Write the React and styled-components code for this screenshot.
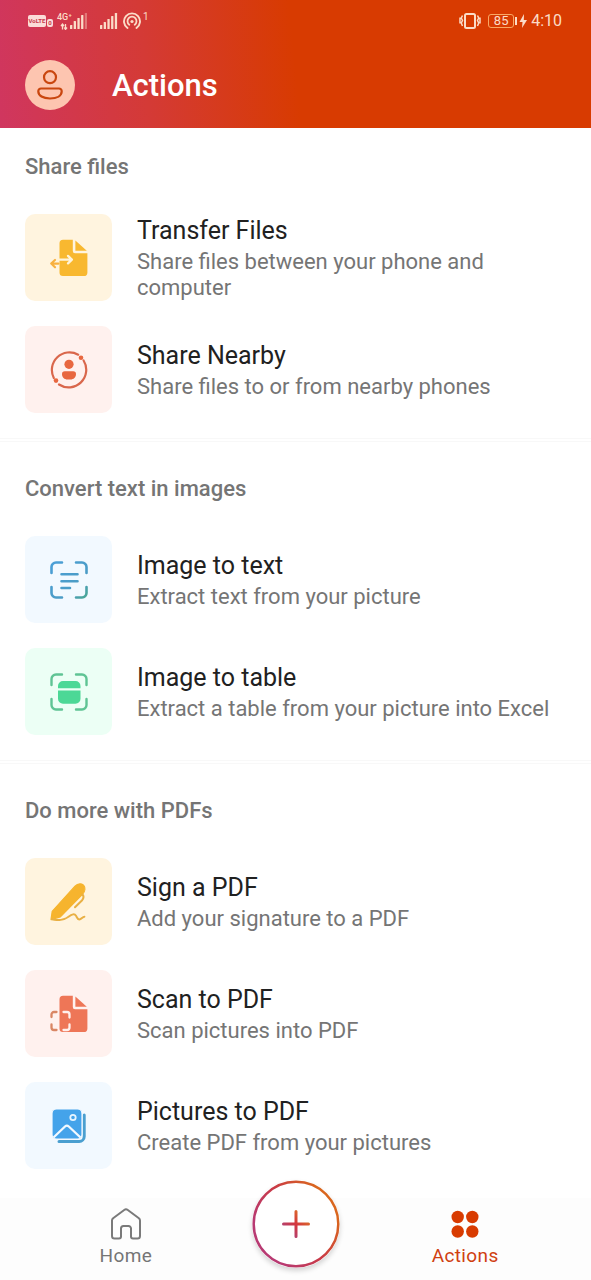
import React from "react";
import styled, { createGlobalStyle } from "styled-components";

const GlobalStyle = createGlobalStyle`
  *, *::before, *::after { box-sizing: border-box; }
  body {
    margin: 0;
    background: #ffffff;
    font-family: Roboto, "Liberation Sans", sans-serif;
    color: #212121;
  }
  h1, h2, h3, p, ul { margin: 0; padding: 0; }
  ul { list-style: none; }
`;

const Screen = styled.div`
  min-height: 100vh;
  display: flex;
  flex-direction: column;
`;

const Header = styled.header`
  background: linear-gradient(84deg, #d0365f 0%, #d43a36 25%, #d83b01 50%);
  color: #ffffff;
`;

const StatusBar = styled.div`
  height: 42px;
  padding: 0 29px 0 28px;
  display: flex;
  align-items: center;
  justify-content: space-between;
  color: #fbdcc8;
`;

const StatusGroup = styled.div`
  display: flex;
  align-items: center;
  gap: ${(p) => p.$gap}px;
`;

const VolteBadge = styled.span`
  width: 18px;
  border-radius: 2px;
  background: #fbdcd8;
  color: #c8384c;
  font-size: 6px;
  line-height: 12px;
  font-weight: 700;
  text-align: center;
`;

const SimNumber = styled.span`
  width: 6px;
  border-radius: 2px;
  background: #fbdcd8;
  color: #c8384c;
  font-size: 6px;
  line-height: 8px;
  font-weight: 700;
  text-align: center;
  margin-top: 4px;
`;

const NetworkStack = styled.div`
  display: flex;
  flex-direction: column;
  width: 12px;
`;

const NetworkLabel = styled.span`
  font-size: 9px;
  line-height: 9px;
  font-weight: 500;
  white-space: nowrap;
`;

const HotspotCount = styled.span`
  font-size: 10px;
  line-height: 10px;
  align-self: flex-start;
`;

const Battery = styled.span`
  width: 26px;
  height: 14px;
  border: 1px solid #f9a865;
  border-radius: 3px;
  font-size: 13px;
  line-height: 12px;
  text-align: center;
`;

const Clock = styled.time`
  font-size: 16px;
  line-height: 20px;
`;

const AppBar = styled.div`
  height: 86px;
  padding: 0 25px;
  display: flex;
  align-items: center;
  gap: 37px;
`;

const Avatar = styled.button`
  width: 50px;
  height: 50px;
  padding: 0;
  border: 0;
  border-radius: 50%;
  background: #fdc5b0;
  display: grid;
  place-items: center;
`;

const Title = styled.h1`
  padding-top: 2px;
  font-size: 31px;
  line-height: 36px;
  font-weight: 500;
`;

const Main = styled.main`
  flex: 1;
`;

const Section = styled.section`
  padding: 33px 25px 25px;
  border-top: 4px double #f8f8f8;

  &:first-child {
    padding-top: 25px;
    border-top: 0;
  }
`;

const SectionTitle = styled.h2`
  margin-bottom: 33px;
  font-size: 22px;
  line-height: 28px;
  font-weight: 500;
  color: #757575;
`;

const ActionList = styled.ul`
  display: flex;
  flex-direction: column;
  gap: 25px;
`;

const ActionButton = styled.button`
  width: 100%;
  padding: 0;
  border: 0;
  background: none;
  font: inherit;
  color: inherit;
  text-align: left;
  display: flex;
  align-items: center;
  gap: 25px;
`;

const Tile = styled.span`
  flex: none;
  width: 87px;
  height: 87px;
  border-radius: 10px;
  background: ${(p) => p.$tint};
  display: grid;
  place-items: center;
`;

const ActionText = styled.span`
  display: flex;
  flex-direction: column;
  gap: 2px;
`;

const ActionName = styled.span`
  font-size: 25px;
  line-height: 33px;
`;

const ActionHint = styled.span`
  font-size: 22px;
  line-height: 26px;
  color: #757575;
`;

const BottomNav = styled.nav`
  position: sticky;
  bottom: 0;
  height: 82px;
  padding: 0 41px;
  background: #fdfdfd;
  display: grid;
  grid-template-columns: repeat(3, 1fr);
  justify-items: center;
`;

const NavLink = styled.a`
  padding-top: 10px;
  display: flex;
  flex-direction: column;
  align-items: center;
  gap: 4px;
  font-size: 19px;
  line-height: 24px;
  letter-spacing: 0.02em;
  text-decoration: none;
  color: ${(p) => (p.$active ? "#d04010" : "#757575")};
`;

const CreateButton = styled.button`
  position: absolute;
  top: -18px;
  left: 50%;
  transform: translateX(-50%);
  width: 88px;
  height: 88px;
  padding: 0;
  border: 0;
  border-radius: 50%;
  background: #ffffff;
  box-shadow: 0 3px 5px rgba(0, 0, 0, 0.16);
`;

const Icon = ({ size = 38, children, ...rest }) => (
  <svg width={size} height={size} viewBox={`0 0 ${size} ${size}`} fill="none" aria-hidden="true" {...rest}>
    {children}
  </svg>
);

const Bars = ({ width, height, heights, faintLast }) => (
  <svg width={width} height={height} viewBox={`0 0 ${width} ${height}`} fill="currentColor" aria-hidden="true">
    {heights.map((h, i) => (
      <rect key={i} x={i * 3.7} y={height - h} width="2.3" height={h} rx="0.5" opacity={faintLast && i === heights.length - 1 ? 0.4 : 1} />
    ))}
  </svg>
);

const Sheet = ({ color }) => (
  <g fill={color}>
    <path d="M13 .8H22.8V12a2.2 2.2 0 0 0 2.2 2.2H37.4V33.4A3.7 3.7 0 0 1 33.7 37.1H13a3.5 3.5 0 0 1-3.5-3.5V4.3A3.5 3.5 0 0 1 13 .8Z" />
    <path d="M25.4 1.4 36.8 11.8H25.4Z" />
  </g>
);

const TransferIcon = () => (
  <Icon>
    <Sheet color="#f8b830" />
    <path d="M7 20.600H21.500M18 16.900 21.900 20.600 18 24.400" stroke="#fff4da" strokeWidth="2.300" strokeLinecap="round" strokeLinejoin="round" />
    <path d="M8.500 24.600H2M5 20.900 1.200 24.600 5 28.300" stroke="#f8b040" strokeWidth="2.100" strokeLinecap="round" strokeLinejoin="round" />
  </Icon>
);

const NearbyIcon = () => (
  <Icon>
    <path d="M28.200 3.700A17.600 17.600 0 0 0 3.800 27M9 33.500A17.600 17.600 0 0 0 33.600 9.500" stroke="#d9674c" strokeWidth="2.200" strokeLinecap="round" />
    <g fill="#e8673f">
      <circle cx="31" cy="6.800" r="2.300" />
      <circle cx="6" cy="29.600" r="2.300" />
      <circle cx="19" cy="13.300" r="4.600" />
      <path d="M14.800 20.300h8.400a2.800 2.800 0 0 1 2.800 2.800c0 3.300-2.400 5.500-5.500 5.500h-3c-3.100 0-5.500-2.200-5.500-5.500a2.800 2.800 0 0 1 2.800-2.800Z" />
    </g>
  </Icon>
);

const corners = "M1.5 12V6A4.5 4.5 0 0 1 6 1.5H12M26 1.5H32A4.5 4.5 0 0 1 36.5 6V12M36.5 26V32A4.5 4.5 0 0 1 32 36.5H26M12 36.5H6A4.5 4.5 0 0 1 1.5 32V26";

const ImageTextIcon = () => (
  <Icon>
    <defs>
      <linearGradient id="scanBlue" x1="0" y1="0" x2="38" y2="38" gradientUnits="userSpaceOnUse">
        <stop stopColor="#4b9fd8" />
        <stop offset="0.7" stopColor="#4b9cc4" />
        <stop offset="1" stopColor="#4aa88c" />
      </linearGradient>
    </defs>
    <g stroke="url(#scanBlue)" strokeWidth="2.6" strokeLinecap="round">
      <path d={corners} />
      <path d="M11.5 13.2H27.5M11.5 20.2H27.5M11.5 27H20" />
    </g>
  </Icon>
);

const ImageTableIcon = () => (
  <Icon>
    <path d={corners} stroke="#5fc494" strokeWidth="2.4" strokeLinecap="round" />
    <path d="M8 15.2V13a5 5 0 0 1 5-5H25.5a5 5 0 0 1 5 5v2.2ZM8 17.6H30.5V25.8a5 5 0 0 1-5 5H13a5 5 0 0 1-5-5Z" fill="#4cd896" />
  </Icon>
);

const SignIcon = () => (
  <Icon>
    <path d="M2.2 28.3 25 3.2C28 .2 32 .3 33.7 2.3c2 2.3 1.500 6-1 8.700L10.400 33.800 1 36.600Z" fill="#f6b42e" stroke="#f6b42e" strokeWidth="1.200" strokeLinejoin="round" />
    <path d="M32.500 11.500c1.800 2.200 1.200 4-.6 6L25 24.300M2 36.300c6 1.400 12 .8 16.500-2.600 3.500-2.600 6-3.300 7.500-1 1.200 1.900 1.400 3.800 3.400 3.800 2 0 3-2.500 5-2.800" stroke="#e9b044" strokeWidth="2" strokeLinecap="round" strokeLinejoin="round" />
  </Icon>
);

const ScanIcon = () => (
  <Icon>
    <Sheet color="#ee7657" />
    <path d="M1.500 22V19.500A2.500 2.500 0 0 1 4 17H6.500M1.500 29.500V32.500A2.500 2.500 0 0 0 4 35H6.500" stroke="#d98664" strokeWidth="2.300" strokeLinecap="round" />
    <path d="M13.500 17H17A2.500 2.500 0 0 1 19.500 19.500V22.500M19.500 29.500V32.500A2.500 2.500 0 0 1 17 35H13.500" stroke="#fff0ec" strokeWidth="2.300" strokeLinecap="round" />
  </Icon>
);

const PicturesIcon = () => (
  <Icon>
    <path d="M34.200 8V29.500A5 5 0 0 1 29.200 34.500H9" stroke="#4a9fd0" strokeWidth="3" strokeLinecap="round" />
    <rect x="2" y="2" width="30" height="30" rx="4.500" fill="#44a3ea" stroke="#f2f9ff" strokeWidth="1.200" />
    <path d="M3.500 30.500 15 19.500a2.800 2.800 0 0 1 3.800 0L30.500 30.500" stroke="#f2f9ff" strokeWidth="2.300" />
    <circle cx="23" cy="10.500" r="2.700" stroke="#e6f5ff" strokeWidth="1.800" />
  </Icon>
);

const sections = [
  {
    title: "Share files",
    actions: [
      { name: "Transfer Files", hint: "Share files between your phone and computer", tint: "#fff4df", Glyph: TransferIcon },
      { name: "Share Nearby", hint: "Share files to or from nearby phones", tint: "#fff1ee", Glyph: NearbyIcon },
    ],
  },
  {
    title: "Convert text in images",
    actions: [
      { name: "Image to text", hint: "Extract text from your picture", tint: "#f2f9ff", Glyph: ImageTextIcon },
      { name: "Image to table", hint: "Extract a table from your picture into Excel", tint: "#ecfff5", Glyph: ImageTableIcon },
    ],
  },
  {
    title: "Do more with PDFs",
    actions: [
      { name: "Sign a PDF", hint: "Add your signature to a PDF", tint: "#fff4df", Glyph: SignIcon },
      { name: "Scan to PDF", hint: "Scan pictures into PDF", tint: "#fff1ee", Glyph: ScanIcon },
      { name: "Pictures to PDF", hint: "Create PDF from your pictures", tint: "#f2f9ff", Glyph: PicturesIcon },
    ],
  },
];

export default function App() {
  return (
    <Screen>
      <GlobalStyle />
      <Header>
        <StatusBar>
          <StatusGroup $gap={13}>
            <StatusGroup $gap={4}>
              <StatusGroup $gap={1}>
                <VolteBadge>VoLTE</VolteBadge>
                <SimNumber>0</SimNumber>
              </StatusGroup>
              <StatusGroup $gap={1}>
                <NetworkStack>
                  <NetworkLabel>4G⁺</NetworkLabel>
                  <svg width="12" height="8" viewBox="0 0 12 8" aria-hidden="true">
                    <path d="M5.500 7.500V2M4 4 5.500 2 7 4M8.500 2V7.500M7.200 5.500 8.500 7.500 10 5.500" fill="none" stroke="currentColor" strokeWidth="1.300" />
                  </svg>
                </NetworkStack>
                <Bars width={17} height={16} heights={[4, 8, 11, 14, 16]} faintLast />
              </StatusGroup>
            </StatusGroup>
            <StatusGroup $gap={2}>
              <StatusGroup $gap={5}>
                <Bars width={18} height={16} heights={[4, 7, 10, 13, 16]} />
                <Icon size={18} stroke="currentColor" strokeLinecap="round">
                  <path d="M4.500 16A8 8 0 1 1 13.500 16" strokeWidth="1.900" />
                  <path d="M6.300 12.800A4.500 4.500 0 1 1 11.700 12.800" strokeWidth="1.800" />
                  <circle cx="9" cy="9.500" r="1.600" fill="currentColor" stroke="none" />
                </Icon>
              </StatusGroup>
              <HotspotCount>1</HotspotCount>
            </StatusGroup>
          </StatusGroup>
          <StatusGroup $gap={4}>
            <StatusGroup $gap={7}>
              <svg width="22" height="16" viewBox="0 0 22 16" fill="none" stroke="currentColor" aria-hidden="true">
                <rect x="6" y="1" width="10" height="14" rx="1.500" strokeWidth="2" />
                <path d="M3.500 2.500 2.300 5 3.500 7.500 2.300 10 3.500 13M1 4.500V10.500M18.500 2.500 19.700 5 18.500 7.500 19.700 10 18.500 13M21 4.500V10.500" strokeWidth="1.500" />
              </svg>
              <StatusGroup $gap={1}>
                <Battery>85</Battery>
                <svg width="12" height="14" viewBox="0 0 12 14" fill="currentColor" aria-hidden="true">
                  <rect x="0" y="3" width="2" height="8" />
                  <path d="M9 0 4.500 8H7.500L7 14 12 6H8.800Z" />
                </svg>
              </StatusGroup>
            </StatusGroup>
            <Clock>4:10</Clock>
          </StatusGroup>
        </StatusBar>
        <AppBar>
          <Avatar type="button" aria-label="Account">
            <Icon size={30} stroke="#c9460f" strokeWidth="2.200">
              <circle cx="15" cy="7.200" r="6" />
              <path d="M6 18.500H24A2.700 2.700 0 0 1 26.700 21.200C26.700 25.700 22 28.500 15 28.500S3.300 25.700 3.300 21.200A2.700 2.700 0 0 1 6 18.500Z" />
            </Icon>
          </Avatar>
          <Title>Actions</Title>
        </AppBar>
      </Header>

      <Main>
        {sections.map(({ title, actions }) => (
          <Section key={title}>
            <SectionTitle>{title}</SectionTitle>
            <ActionList>
              {actions.map(({ name, hint, tint, Glyph }) => (
                <li key={name}>
                  <ActionButton type="button">
                    <Tile $tint={tint}>
                      <Glyph />
                    </Tile>
                    <ActionText>
                      <ActionName>{name}</ActionName>
                      <ActionHint>{hint}</ActionHint>
                    </ActionText>
                  </ActionButton>
                </li>
              ))}
            </ActionList>
          </Section>
        ))}
      </Main>

      <BottomNav>
        <NavLink href="#home">
          <Icon size={32} stroke="#7a7a7a" strokeWidth="2" strokeLinejoin="round">
            <path d="M2 12.500a3 3 0 0 1 1.100-2.300L14.200 2a3 3 0 0 1 3.600 0l11.100 8.200A3 3 0 0 1 30 12.500V28a2.500 2.500 0 0 1-2.500 2.500H23A2 2 0 0 1 21 28.500V20.500A2.500 2.500 0 0 0 18.500 18h-5A2.500 2.500 0 0 0 11 20.500v8a2 2 0 0 1-2 2H4.500A2.500 2.500 0 0 1 2 28Z" />
          </Icon>
          Home
        </NavLink>
        <span />
        <NavLink href="#actions" $active aria-current="page">
          <Icon size={32} fill="#d83b01">
            <circle cx="8.700" cy="9" r="6.200" />
            <circle cx="23.300" cy="9" r="6.200" />
            <circle cx="8.700" cy="23.500" r="6.200" />
            <circle cx="23.300" cy="23.500" r="6.200" />
          </Icon>
          Actions
        </NavLink>
        <CreateButton type="button" aria-label="Create">
          <Icon size={88}>
            <defs>
              <linearGradient id="ring" x1="14" y1="60" x2="74" y2="20" gradientUnits="userSpaceOnUse">
                <stop stopColor="#b83a72" />
                <stop offset="0.500" stopColor="#c93a46" />
                <stop offset="1" stopColor="#d9661e" />
              </linearGradient>
              <linearGradient id="plus" x1="34" y1="54" x2="54" y2="34" gradientUnits="userSpaceOnUse">
                <stop stopColor="#a8457f" />
                <stop offset="0.500" stopColor="#d4363e" />
                <stop offset="1" stopColor="#dd7a24" />
              </linearGradient>
            </defs>
            <circle cx="44" cy="44" r="42.300" stroke="url(#ring)" strokeWidth="2.500" />
            <path d="M31.500 44H56.500M44 31.500V56.500" stroke="url(#plus)" strokeWidth="3" strokeLinecap="round" />
          </Icon>
        </CreateButton>
      </BottomNav>
    </Screen>
  );
}
